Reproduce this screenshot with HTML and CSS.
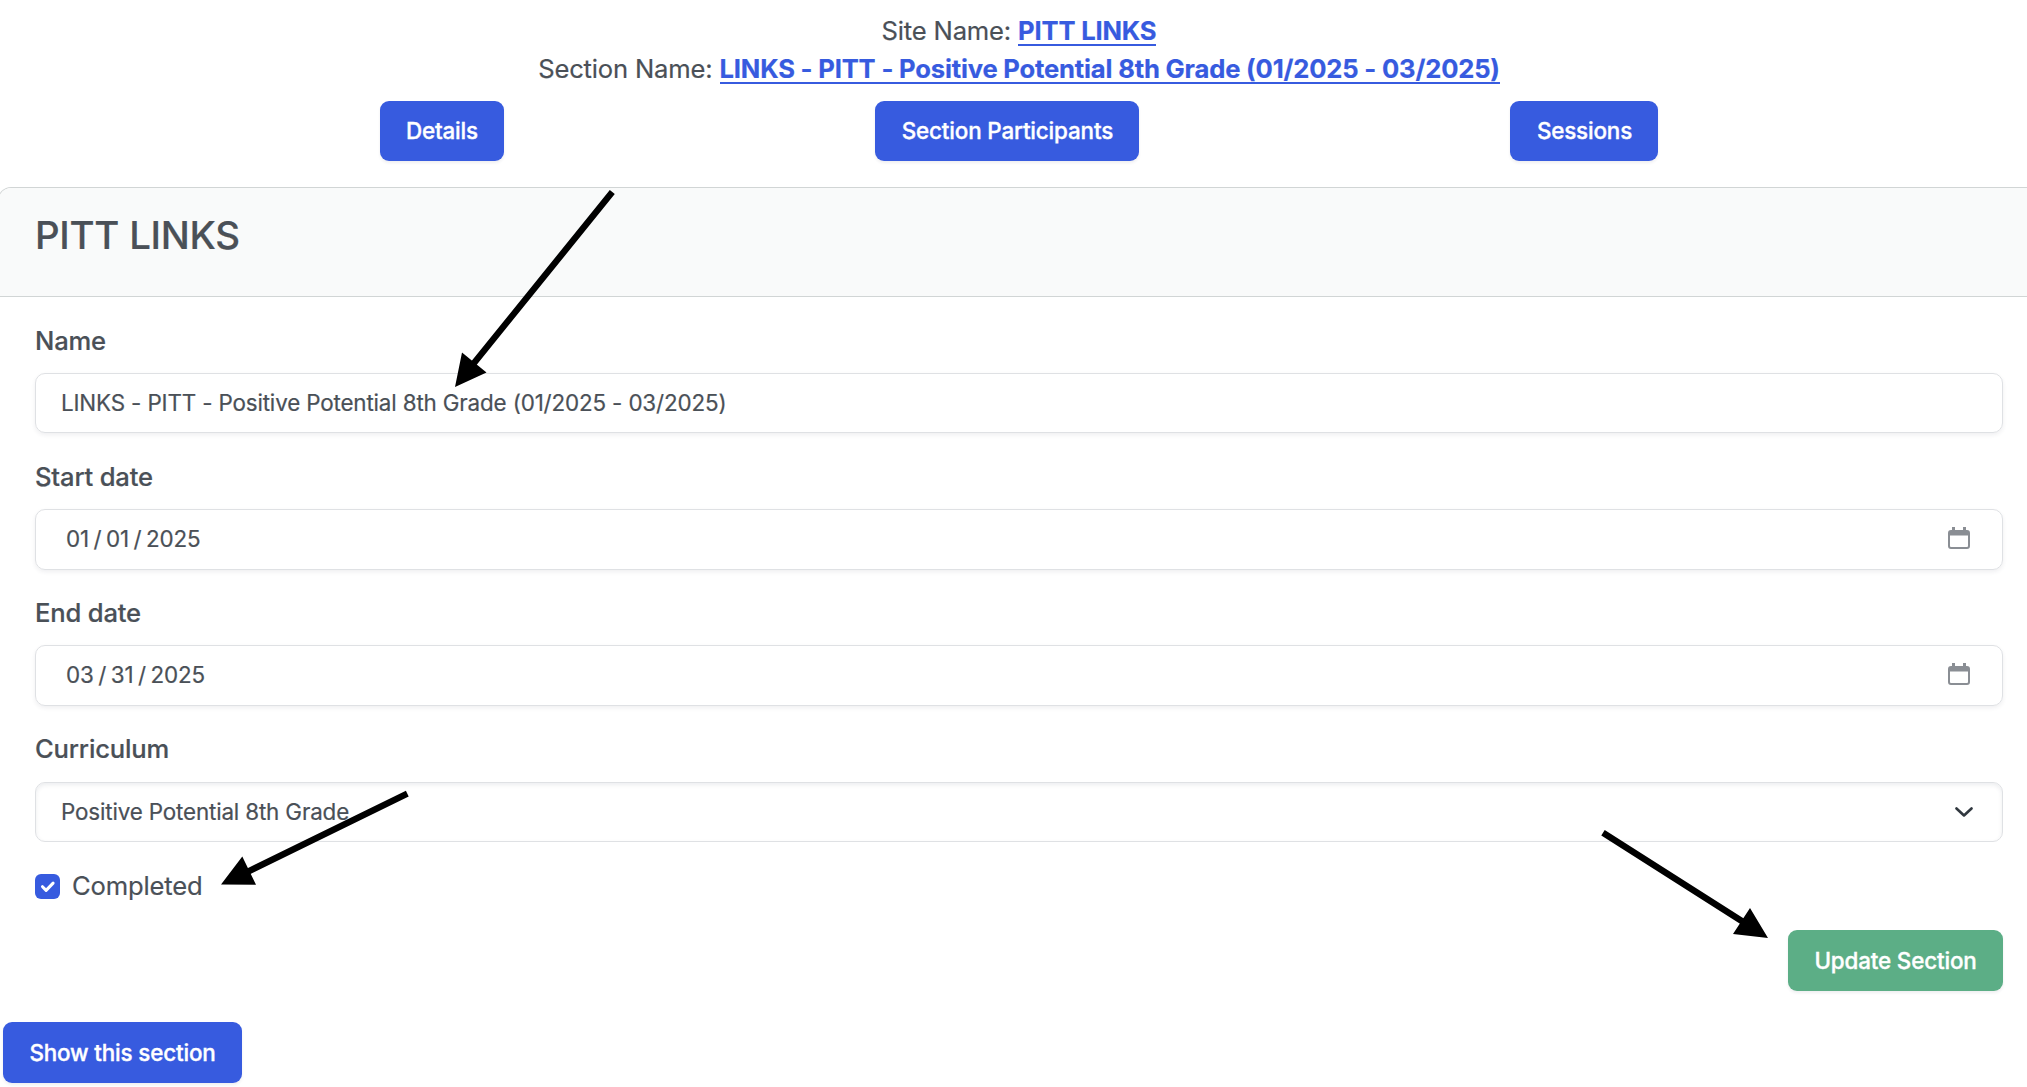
FILE: index.html
```html
<!DOCTYPE html>
<html lang="en">
<head>
<meta charset="utf-8">
<title>PITT LINKS</title>
<link rel="stylesheet" href="styles.css">
</head>
<body>
<header class="page-head">
  <div>Site Name: <a class="link" href="#">PITT LINKS</a></div>
  <div>Section Name: <a class="link" href="#">LINKS - PITT - Positive Potential 8th Grade (01/2025 - 03/2025)</a></div>
  <nav class="tabs">
    <a class="btn" href="#">Details</a>
    <a class="btn" href="#">Section Participants</a>
    <a class="btn" href="#">Sessions</a>
  </nav>
</header>
<main class="card">
  <div class="card-header"><h1 class="title">PITT LINKS</h1></div>
  <form class="card-body">
    <div class="group">
      <div class="label">Name</div>
      <div class="control">LINKS - PITT - Positive Potential 8th Grade (01/2025 - 03/2025)</div>
    </div>
    <div class="group">
      <div class="label">Start date</div>
      <div class="control date">
        <span class="parts"><span>01</span><span>/</span><span>01</span><span>/</span><span>2025</span></span>
        <svg class="calendar" viewBox="0 0 22 22"><path fill-rule="evenodd" d="M4 0h3v3h8V0h3v3h1a3 3 0 0 1 3 3v13a3 3 0 0 1-3 3H3a3 3 0 0 1-3-3V6a3 3 0 0 1 3-3h1zM2 8.4V19a1 1 0 0 0 1 1h16a1 1 0 0 0 1-1V8.4z"/></svg>
      </div>
    </div>
    <div class="group">
      <div class="label">End date</div>
      <div class="control date">
        <span class="parts"><span>03</span><span>/</span><span>31</span><span>/</span><span>2025</span></span>
        <svg class="calendar" viewBox="0 0 22 22"><path fill-rule="evenodd" d="M4 0h3v3h8V0h3v3h1a3 3 0 0 1 3 3v13a3 3 0 0 1-3 3H3a3 3 0 0 1-3-3V6a3 3 0 0 1 3-3h1zM2 8.4V19a1 1 0 0 0 1 1h16a1 1 0 0 0 1-1V8.4z"/></svg>
      </div>
    </div>
    <div class="group">
      <div class="label">Curriculum</div>
      <div class="control select">
        <span>Positive Potential 8th Grade</span>
        <svg class="chevron" viewBox="0 0 18 10"><path d="M1.5 1.5 9 8.5l7.5-7"/></svg>
      </div>
    </div>
    <div class="check">
      <svg class="box" viewBox="0 0 25 25"><rect width="25" height="25" rx="6"/><path d="m7.5 12.7 3.6 3.7 7-7.3"/></svg>
      <span>Completed</span>
    </div>
    <div class="actions"><a class="btn success" href="#">Update Section</a></div>
  </form>
</main>
<footer class="foot"><a class="btn" href="#">Show this section</a></footer>
<svg class="arrows" viewBox="0 0 2027 1087">
  <path d="M612.3 192 470 368M407.3 793.7 243 874M1603 832.7 1748 925"/>
  <path class="tip" d="M455 387l7-34.5 24.5 20zM221 884.5l21.3-28 13.7 28.2zM1768 938l-18-30-17 26z"/>
</svg>
</body>
</html>
```
FILE: styles.css
```css
* { box-sizing: border-box; }
body {
  margin: 0;
  position: relative;
  height: 1087px;
  overflow: hidden;
  background: #fff;
  color: #4a5057;
  font: 400 25.6px/38.4px Inter, sans-serif;
  -webkit-text-stroke: .2px;
}
.page-head { width: 2038px; padding-top: 12px; text-align: center; letter-spacing: -.0068em; }
.link {
  color: #375bdf;
  font-weight: 700;
  text-decoration: none;
  box-shadow: inset 0 -2px #375bdf;
}
.tabs { display: flex; justify-content: space-around; width: 1650px; margin: 12px auto 0; }
.btn {
  display: inline-block;
  height: 61px;
  padding: 14px 26.4px 0;
  border-radius: 9px;
  background: #375bdf;
  color: #fff;
  font-size: 22.4px;
  font-weight: 500;
  line-height: 33px;
  letter-spacing: -.0068em;
  text-decoration: none;
  -webkit-text-stroke: .35px;
  box-shadow: 0 2px 3px rgba(46, 54, 80, .08);
}
.tabs .btn { height: 60px; padding-top: 13px; }
.success { background: #5cae86; }
.card {
  width: 2042px;
  margin: 26px 0 0 -2px;
  border: 1px solid #d1d5d5;
  border-bottom: 0;
  border-radius: 13px 13px 0 0;
  letter-spacing: -.0068em;
}
.card-header {
  height: 109px;
  padding: 23px 36px;
  background: #f9fafa;
  border-bottom: 1px solid #d1d5d5;
  border-radius: 12px 12px 0 0;
}
.title { margin: 0; font-size: 38.4px; line-height: 48px; font-weight: 500; letter-spacing: -.0068em; }
.card-body { padding: 25px 36px 0; }
.group { height: 136.2px; }
.label { font-weight: 500; height: 51px; }
.control {
  display: flex;
  align-items: center;
  justify-content: space-between;
  height: 60px;
  padding: 0 25px;
  border: 1px solid #dfe1e4;
  border-radius: 10px;
  font-size: 22.4px;
  line-height: 34px;
  letter-spacing: -.0068em;
  box-shadow: 0 2px 4px rgba(46, 54, 80, .08);
}
.date { height: 61px; padding: 0 32px 1px 30px; }
.parts { display: flex; gap: 4.6px; }
.calendar { width: 22px; height: 22px; margin-bottom: 2px; fill: #8a8e94; }
.select { margin-top: 1px; padding-right: 29px; box-shadow: inset 0 2px 4px rgba(46, 54, 80, .09); }
.chevron { width: 18px; height: 10px; fill: none; stroke: #31383f; stroke-width: 2.6; stroke-linecap: round; stroke-linejoin: round; }
.check { display: flex; align-items: center; gap: 12px; height: 38px; margin-top: 1px; }
.box { width: 25px; height: 25px; fill: #375bdf; }
.box path { fill: none; stroke: #fff; stroke-width: 3; stroke-linecap: round; stroke-linejoin: round; }
.actions { display: flex; justify-content: flex-end; margin-top: 24.5px; }
.foot { display: flex; padding: 31px 0 0 3px; }
.arrows {
  position: absolute;
  left: 0;
  top: 0;
  width: 2027px;
  height: 1087px;
  fill: none;
  stroke: #000;
  stroke-width: 6.4;
  pointer-events: none;
}
.tip { fill: #000; stroke: none; }
```
